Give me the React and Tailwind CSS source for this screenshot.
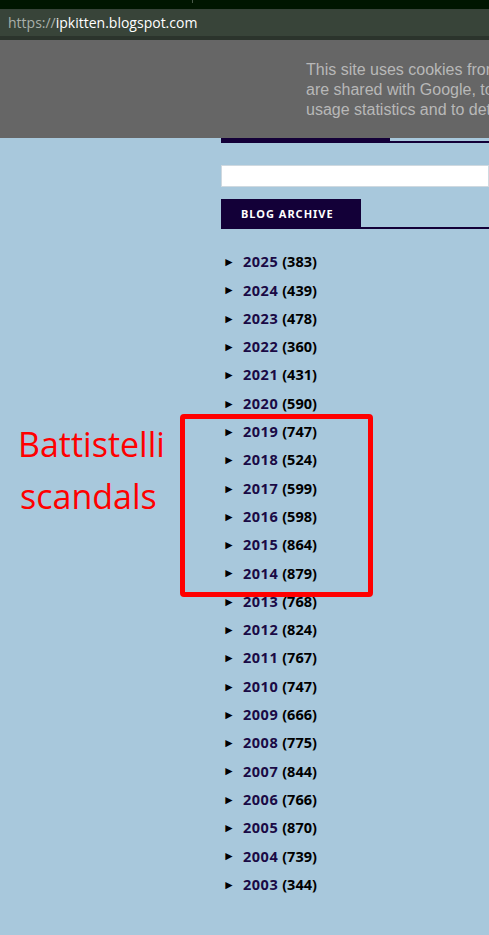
import React from "react";

const years = [
  ["2025", 383], ["2024", 439], ["2023", 478], ["2022", 360], ["2021", 431],
  ["2020", 590], ["2019", 747], ["2018", 524], ["2017", 599], ["2016", 598],
  ["2015", 864], ["2014", 879], ["2013", 768], ["2012", 824], ["2011", 767],
  ["2010", 747], ["2009", 666], ["2008", 775], ["2007", 844], ["2006", 766],
  ["2005", 870], ["2004", 739], ["2003", 344],
];

function YearRow({ year, count }) {
  return (
    <li className="flex items-center h-[28.3px]">
      <span className="text-[12px] text-black w-[22px] pl-[2px] leading-none">►</span>
      <span className="text-[#1a0a45] font-bold text-[14.5px] tracking-[0.5px]">{year}</span>
      <span className="text-black font-bold text-[14.5px] ml-[4px]">({count})</span>
    </li>
  );
}

export default function App() {
  return (
    <div className="w-[489px] h-[935px] overflow-hidden bg-[#a8c8dc] relative" style={{ fontFamily: "'Noto Sans', 'Open Sans', sans-serif" }}>
      {/* browser chrome */}
      <div className="h-[9px] bg-[#001600] relative">
        <div className="absolute left-[192px] top-0 w-px h-[3px] bg-[#4a5a4a]" />
      </div>
      <div className="h-[31px] bg-[#384439] flex items-center pl-[8px] text-[14px] border-b-[4px] border-[#2b342c]" style={{ fontFamily: "'Open Sans', sans-serif" }}>
        <span className="text-[#a9b0a9]">https://</span>
        <span className="text-white">ipkitten.blogspot.com</span>
      </div>

      {/* cookie banner */}
      <div className="h-[98px] bg-[#666666] pl-[306px] pt-[20px] overflow-hidden">
        <div className="text-[#b8b8b8] text-[16px] leading-[20px] whitespace-nowrap" style={{ fontFamily: "'Liberation Sans', Arial, sans-serif" }}>
          <div>This site uses cookies from Google to deliver its services</div>
          <div>are shared with Google, together with performance and security</div>
          <div>usage statistics and to detect and address abuse.</div>
        </div>
      </div>

      {/* sidebar */}
      <div className="pl-[221px]">
        <div className="flex items-end h-[5px]">
          <div className="w-[169px] h-[5px] bg-[#130038]" />
          <div className="flex-1 h-[2px] bg-[#130038]" />
        </div>
        <div className="mt-[22px] h-[22px] bg-white border border-[#cfd9e0]" />
        <div className="mt-[12px] flex items-end">
          <div className="w-[140px] h-[30px] bg-[#130038] flex items-center pl-[20px] text-white text-[11px] font-bold tracking-[1px]">
            BLOG ARCHIVE
          </div>
          <div className="flex-1 h-[2px] bg-[#130038]" />
        </div>
        <ul className="mt-[19px]">
          {years.map(([y, c]) => (
            <YearRow key={y} year={y} count={c} />
          ))}
        </ul>
      </div>

      {/* annotation */}
      <div className="absolute left-[180px] top-[414px] w-[193px] h-[183px] border-[5px] border-[#ff0000] rounded-[4px]" />
      <div className="absolute left-[18px] top-[418px] text-[#ff0000] text-[34px] leading-[52px]" style={{ fontFamily: "'Open Sans', sans-serif" }}>
        <div>Battistelli</div>
        <div className="pl-[2px]">scandals</div>
      </div>
    </div>
  );
}
